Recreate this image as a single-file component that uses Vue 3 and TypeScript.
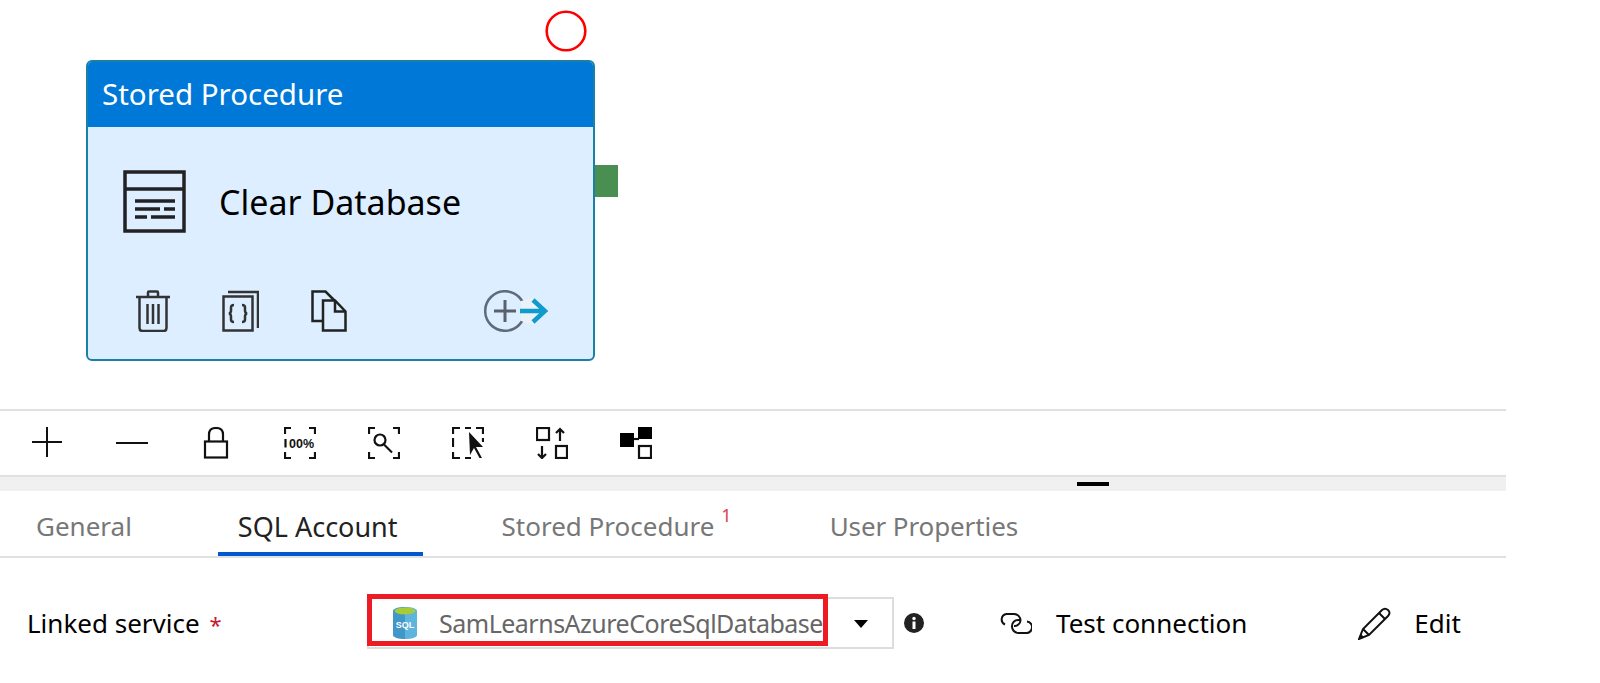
<script setup lang="ts">
interface Tab {
  label: string;
  active?: boolean;
  badge?: string;
}

const tabs: Tab[] = [
  { label: 'General' },
  { label: 'SQL Account', active: true },
  { label: 'Stored Procedure', badge: '1' },
  { label: 'User Properties' },
];
</script>

<template>
  <div class="page">
    <section class="canvas">
      <svg class="add-handle" width="42" height="42" viewBox="0 0 42 42">
        <circle cx="21" cy="21" r="19.3" fill="#fff" stroke="#f00" stroke-width="2.6" />
      </svg>

      <div class="node">
        <div class="node__header">Stored Procedure</div>
        <div class="node__body">
          <svg width="63" height="63" viewBox="0 0 63 63" fill="none" stroke="#222" stroke-width="3.5">
            <rect x="2" y="2" width="59" height="59" />
            <path d="M2 19h59" />
            <path d="M12 31h40M12 39h25M41 39h11M12 47h12M28 47h24" />
          </svg>
          <span class="node__name">Clear Database</span>
        </div>
        <div class="node__actions">
          <svg width="34" height="42" viewBox="0 0 34 42" fill="none" stroke="#333" stroke-width="2.5">
            <path d="M0 7h34M12 7V2.5q0-1 1-1h8q1 0 1 1V7" />
            <path d="M3.5 7v31q0 3 3 3h21q3 0 3-3V7" />
            <path d="M11.500 14v20M17 14v20M22.500 14v20" />
          </svg>
          <svg width="37" height="42" viewBox="0 0 37 42" fill="none" stroke="#333" stroke-width="2.500">
            <path d="M6 2h30v36" />
            <rect x="1.500" y="6.500" width="29" height="34" />
            <path d="M12 15q-3 0-3 2.500v3q0 2.500-2 3 2 .5 2 3v3q0 2.500 3 2.500M20 15q3 0 3 2.500v3q0 2.500 2 3-2 .5-2 3v3q0 2.500-3 2.500" stroke-width="2.500" />
          </svg>
          <svg width="36" height="42" viewBox="0 0 36 42" fill="none" stroke="#222" stroke-width="2.500">
            <path d="M11 31H1.500V1.500h13l9 9" />
            <path d="M12 10.500h12l10.500 11V40.500H12z" fill="#dceeff" />
            <path d="M24 10.500v11h10.500" />
          </svg>
          <svg class="node__add" width="66" height="42" viewBox="0 0 66 42" fill="none">
            <circle cx="21" cy="21" r="19.800" stroke="#5f6b7a" stroke-width="2.500" />
            <path d="M10 21h22M21 10v22" stroke="#59616e" stroke-width="3" />
            <path d="M37 11l13-3 16 13-16 14-13-4z" fill="#eaf2f8" />
            <path d="M36 21h26M49 10l12 11-12 11" stroke="#0f9bcb" stroke-width="4.500" />
          </svg>
        </div>
      </div>

      <div class="node-success"></div>
    </section>

    <nav class="toolbar">
      <svg width="32" height="32" viewBox="0 0 32 32" fill="none" stroke="#111" stroke-width="2">
        <path d="M0 15h30M15 0v30" />
      </svg>
      <svg width="32" height="32" viewBox="0 0 32 32" fill="none" stroke="#111" stroke-width="2">
        <path d="M0 16h32" />
      </svg>
      <svg width="32" height="32" viewBox="0 0 32 32" fill="none" stroke="#111" stroke-width="2.200">
        <rect x="5" y="14.500" width="22" height="16" />
        <path d="M9 14V7.500q0-6.500 7-6.500t7 6.500V14" />
      </svg>
      <svg width="32" height="32" viewBox="0 0 32 32" fill="none" stroke="#111" stroke-width="2.200">
        <path d="M1 7V1h6M25 1h6V7M1 25v6h6M25 31h6V25M1.500 12v8.500" />
        <text x="5" y="20.500" class="toolbar__zoom" fill="#111" stroke="none">00%</text>
      </svg>
      <svg width="32" height="32" viewBox="0 0 32 32" fill="none" stroke="#111" stroke-width="2.200">
        <path d="M1 7V1h6M25 1h6V7M1 25v6h6M25 31h6V25" />
        <circle cx="12" cy="13" r="5.500" />
        <path d="M16 17.500l8 8" />
      </svg>
      <svg width="32" height="32" viewBox="0 0 32 32" fill="none" stroke="#111" stroke-width="2.200">
        <path d="M1 7V1h7M13 1h6M24 1h7V7M31 11v4M1 11v9M1 25v6h7M13 31h6" />
        <path d="M17 5l14 15h-7l6 11h-2.500L22 21l-4 7z" fill="#111" stroke="none" />
      </svg>
      <svg width="32" height="32" viewBox="0 0 32 32" fill="none" stroke="#111" stroke-width="2.200">
        <rect x="1" y="1" width="12" height="12" />
        <rect x="20" y="19" width="11" height="12" />
        <path d="M24 14V2M20 6l4-4 4 4M6 19v12M2 27l4 4 4-4" />
      </svg>
      <svg width="32" height="32" viewBox="0 0 32 32" fill="none" stroke="#111" stroke-width="2.200">
        <rect x="0" y="6" width="14" height="14" fill="#000" stroke="none" />
        <rect x="18" y="0" width="14" height="12" fill="#000" stroke="none" />
        <path d="M14 12h5" />
        <rect x="19" y="19" width="12" height="12" />
      </svg>
    </nav>

    <div class="splitter"><span class="splitter__grip"></span></div>

    <div class="tabs">
      <div v-for="tab in tabs" :key="tab.label" :class="['tab', { 'tab--active': tab.active }]">
        {{ tab.label }}<sup v-if="tab.badge" class="tab__badge">{{ tab.badge }}</sup>
      </div>
    </div>

    <div class="field">
      <label class="field__label">Linked service <span class="field__required">*</span></label>
      <div class="select">
        <svg width="24" height="32" viewBox="0 0 24 32">
          <path d="M0 4v24c0 2.500 5.400 4 12 4V0C5.400 0 0 1.500 0 4z" fill="#3f98c8" />
          <path d="M24 4v24c0 2.500-5.400 4-12 4V0c6.600 0 12 1.500 12 4z" fill="#5db4dc" />
          <ellipse cx="12" cy="4" rx="10.500" ry="3.500" fill="#a7cc37" />
          <text x="12" y="21" class="select__sql" fill="#fff">SQL</text>
        </svg>
        <span class="select__value">SamLearnsAzureCoreSqlDatabase</span>
        <span class="select__caret"></span>
        <div class="select__highlight"></div>
      </div>
      <svg class="field__info" width="20" height="20" viewBox="0 0 20 20">
        <circle cx="10" cy="10" r="10" fill="#222" />
        <rect x="8.500" y="8.500" width="3" height="7.500" fill="#fff" />
        <circle cx="10" cy="5.500" r="1.700" fill="#fff" />
      </svg>
      <div class="action action--test">
        <svg width="32" height="21" viewBox="0 0 32 21" fill="none" stroke="#111" stroke-width="2">
          <path d="M5 11.500A5.500 5.500 0 0 1 6.500 1H14a6.500 6.500 0 0 1 6.500 6.500A6 6 0 0 1 14 13" />
          <path d="M27 8.500A5.500 5.500 0 0 1 25.500 20H18a6.500 6.500 0 0 1-6-7 6 6 0 0 1 6-6h2" />
        </svg>
        Test connection
      </div>
      <div class="action action--edit">
        <svg width="33" height="33" viewBox="0 0 33 33" fill="none" stroke="#111" stroke-width="2">
          <path d="M1 32l4-10L24 3q3-2.500 6 0t0 6L11 28z" />
          <path d="M5 22l6 6M21 6l6 6M2.500 28l2.500 2.500" />
        </svg>
        Edit
      </div>
    </div>
  </div>
</template>

<style>
html,
body {
  margin: 0;
  background: #fff;
}
</style>

<style scoped>
.page {
  width: 1506px;
  height: 683px;
  overflow: hidden;
  font-family: "Noto Sans", "Open Sans", sans-serif;
  color: #111;
}

.canvas {
  position: relative;
  height: 409px;
}

.add-handle {
  position: absolute;
  left: 545px;
  top: 10px;
}

.node {
  position: absolute;
  left: 86px;
  top: 60px;
  width: 509px;
  height: 301px;
  box-sizing: border-box;
  display: flex;
  flex-direction: column;
  background: #dceeff;
  border: 2px solid #1b7fa6;
  border-radius: 6px;
  overflow: hidden;
}

.node__header {
  height: 67px;
  flex: none;
  display: flex;
  align-items: center;
  padding-left: 16px;
  margin: -2px -2px 0;
  background: #0078d7;
  color: #fff;
  font-size: 29.5px;
}

.node__body {
  display: flex;
  align-items: center;
  gap: 33px;
  padding: 43px 0 0 35px;
}

.node__name {
  font-size: 34px;
  color: #000;
}

.node__actions {
  display: flex;
  align-items: center;
  gap: 52px;
  margin-top: 57px;
  padding: 0 43px 0 48px;
}

.node__add {
  margin-left: auto;
}

.node-success {
  position: absolute;
  left: 595px;
  top: 165px;
  width: 23px;
  height: 32px;
  background: #4a8f52;
}

.toolbar {
  display: flex;
  align-items: flex-start;
  gap: 52px;
  height: 64px;
  padding-left: 32px;
  border-top: 2px solid #e0e0e0;
  border-bottom: 2px solid #e0e0e0;
}

.toolbar svg {
  margin-top: 16px;
}

.toolbar__zoom {
  font-family: "Liberation Sans", sans-serif;
  font-size: 12.500px;
  font-weight: 700;
}

.splitter {
  display: flex;
  height: 14px;
  background: #f0f0f0;
}

.splitter__grip {
  width: 32px;
  height: 4px;
  margin: 5px 0 0 1077px;
  background: #000;
}

.tabs {
  display: flex;
  height: 65px;
  padding-left: 16px;
  gap: 60px;
  border-bottom: 2px solid #e0e0e0;
}

.tab {
  display: flex;
  align-items: flex-start;
  box-sizing: border-box;
  padding: 17px 22px 0 20px;
  font-size: 26px;
  color: #777;
}

.tab:first-child {
  margin-right: 4px;
}

.tab:nth-child(3) {
  padding-left: 19px;
  padding-right: 18px;
}

.tab:last-child {
  letter-spacing: -0.1px;
}

.tab--active {
  padding-right: 25px;
  font-size: 27px;
  color: #222;
  border-bottom: 4px solid #0058d0;
}

.tab__badge {
  margin: -6px 0 0 7px;
  font-size: 18px;
  line-height: 26px;
  color: #e04050;
}

.field {
  display: flex;
  align-items: center;
  height: 52px;
  margin-top: 39px;
  padding-left: 27px;
}

.field__label {
  width: 340px;
  flex: none;
  font-size: 26px;
  color: #000;
}

.field__required {
  margin-left: 3px;
  font-size: 22px;
  color: #c02030;
}

.select {
  position: relative;
  display: flex;
  align-items: center;
  box-sizing: border-box;
  width: 527px;
  height: 52px;
  flex: none;
  padding-left: 24px;
  border: 2px solid #ddd;
}

.select__value {
  margin-left: 22px;
  font-size: 25px;
  letter-spacing: -0.5px;
  color: #666;
  white-space: nowrap;
}

.select__sql {
  font-family: "Liberation Sans", sans-serif;
  font-size: 9px;
  font-weight: 700;
  text-anchor: middle;
}

.select__caret {
  position: absolute;
  left: 485px;
  top: 21px;
  border-left: 7px solid transparent;
  border-right: 7px solid transparent;
  border-top: 8px solid #000;
}

.select__highlight {
  position: absolute;
  left: -2px;
  top: -5px;
  width: 461px;
  height: 52px;
  box-sizing: border-box;
  border: 5px solid #ed1c24;
}

.field__info {
  flex: none;
  margin-left: 10px;
}

.action {
  display: flex;
  align-items: center;
  gap: 24px;
  font-size: 26px;
  color: #000;
}

.action--test {
  margin-left: 76px;
}

.action--edit {
  gap: 23px;
  margin-left: 111px;
}
</style>
